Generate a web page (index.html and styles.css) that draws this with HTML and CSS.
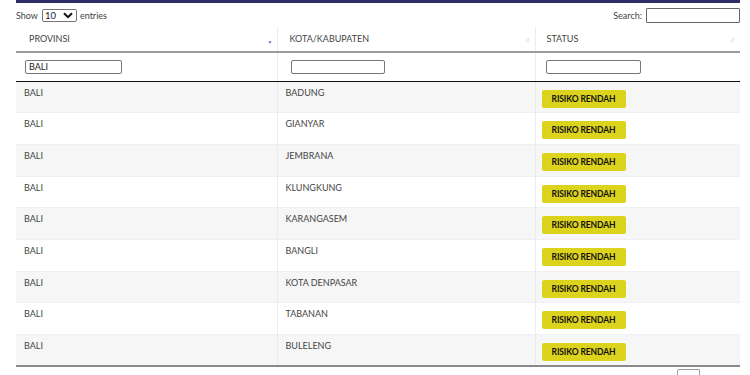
FILE: index.html
```html
<!DOCTYPE html>
<html>
<head>
<meta charset="utf-8">
<link rel="stylesheet" href="styles.css">
</head>
<body>
<div class="wrap">
  <div class="topbar"></div>
  <div class="controls">
    <div class="length">Show <span class="select">10 <svg class="chev" viewBox="0 0 10 7" width="10" height="7"><path d="M1 1.2 L5 5.2 L9 1.2" fill="none" stroke="#111" stroke-width="2"/></svg></span> entries</div>
    <div class="search">Search: <span class="sbox"></span></div>
  </div>
  <table class="grid">
    <colgroup><col class="c1"><col class="c2"><col class="c3"></colgroup>
    <thead>
      <tr class="head">
        <th>PROVINSI<span class="sort desc">&#9660;</span></th>
        <th>KOTA/KABUPATEN<span class="sort both">&#8693;</span></th>
        <th>STATUS<span class="sort both">&#8693;</span></th>
      </tr>
      <tr class="filter">
        <td><span class="fbox">BALI</span></td>
        <td><span class="fbox"></span></td>
        <td><span class="fbox"></span></td>
      </tr>
    </thead>
    <tbody>
      <tr class="odd"><td>BALI</td><td>BADUNG</td><td><span class="badge">RISIKO RENDAH</span></td></tr>
      <tr><td>BALI</td><td>GIANYAR</td><td><span class="badge">RISIKO RENDAH</span></td></tr>
      <tr class="odd"><td>BALI</td><td>JEMBRANA</td><td><span class="badge">RISIKO RENDAH</span></td></tr>
      <tr><td>BALI</td><td>KLUNGKUNG</td><td><span class="badge">RISIKO RENDAH</span></td></tr>
      <tr class="odd"><td>BALI</td><td>KARANGASEM</td><td><span class="badge">RISIKO RENDAH</span></td></tr>
      <tr><td>BALI</td><td>BANGLI</td><td><span class="badge">RISIKO RENDAH</span></td></tr>
      <tr class="odd"><td>BALI</td><td>KOTA DENPASAR</td><td><span class="badge">RISIKO RENDAH</span></td></tr>
      <tr><td>BALI</td><td>TABANAN</td><td><span class="badge">RISIKO RENDAH</span></td></tr>
      <tr class="odd"><td>BALI</td><td>BULELENG</td><td><span class="badge">RISIKO RENDAH</span></td></tr>
    </tbody>
  </table>
  <div class="pager"><span class="pbtn"></span></div>
</div>
</body>
</html>
```
FILE: styles.css
```css
* { box-sizing: border-box; }
html, body { margin: 0; padding: 0; background: #fff; overflow: hidden; }
body { font-family: Lato, "Open Sans", sans-serif; color: #333; font-size: 9px; }
.wrap { width: 724px; margin-left: 16px; }
.topbar { height: 3px; background: #2d2e66; }
.controls { display: flex; justify-content: space-between; align-items: center; height: 24px; padding-top: 1px; }
.length { display: flex; align-items: center; gap: 3px; font-size: 9px; color: #444; }
.select { display: inline-flex; align-items: center; justify-content: space-between; width: 35px; height: 13px; border: 1px solid #777; border-radius: 2px; padding: 0 3px 0 2px; font-size: 9.5px; color: #222; margin-left: 1px; }
.chev { display: block; }
.search { display: flex; align-items: center; gap: 4px; font-size: 9px; color: #444; }
.sbox { display: inline-block; width: 94px; height: 15px; border: 1px solid #666; border-radius: 1px; }
.grid { width: 724px; border-collapse: collapse; table-layout: fixed; border-bottom: 2px solid #8a8a8a; }
.c1 { width: 261px; }
.c2 { width: 258px; }
.c3 { width: 205px; }
.head th { height: 25px; text-align: left; font-weight: 400; font-size: 9px; color: #444; padding: 0 0 2px 13px; position: relative; border-right: 1px solid #ececec; border-bottom: 2px solid #9a9a9a; }
.head th:last-child { border-right: none; padding-left: 11px; }
.head th:nth-child(2) { padding-left: 12px; }
.sort { position: absolute; right: 5px; top: 9px; font-size: 6px; color: #ddd; }
.sort.desc { color: #6d74b0; font-size: 5px; top: 12px; right: 4px; }
.filter td { height: 29px; border-bottom: 1px solid #111; border-right: 1px solid #ececec; padding: 0 0 0 9px; }
.filter td:last-child { border-right: none; padding-left: 10px; }
.fbox { display: block; width: 97px; height: 14px; border: 1px solid #777; border-radius: 2px; font-size: 9px; color: #222; line-height: 12px; padding-left: 3px; }
.filter td:nth-child(2) .fbox { width: 94px; margin-left: 4px; }
.filter td:nth-child(3) .fbox { width: 95px; }
tbody tr { height: 31.7px; }
tbody td { vertical-align: top; padding: 5px 0 0 8px; font-size: 9px; color: #444; border-right: 1px solid #ececec; border-top: 1px solid #f0f0f0; }
tbody td:last-child { border-right: none; padding: 8px 0 0 6px; }
tbody tr.odd td { background: #f6f6f6; }
.badge { display: inline-flex; align-items: center; justify-content: center; width: 84px; height: 18px; background: #dcd31d; border-radius: 2px; font-weight: 700; font-size: 8.5px; color: #111; letter-spacing: -0.1px; }
.pager { display: flex; justify-content: flex-end; padding: 2px 40px 0 0; }
.pbtn { display: block; width: 23px; height: 12px; border: 1px solid #999; border-bottom: none; border-radius: 2px 2px 0 0; }
```
